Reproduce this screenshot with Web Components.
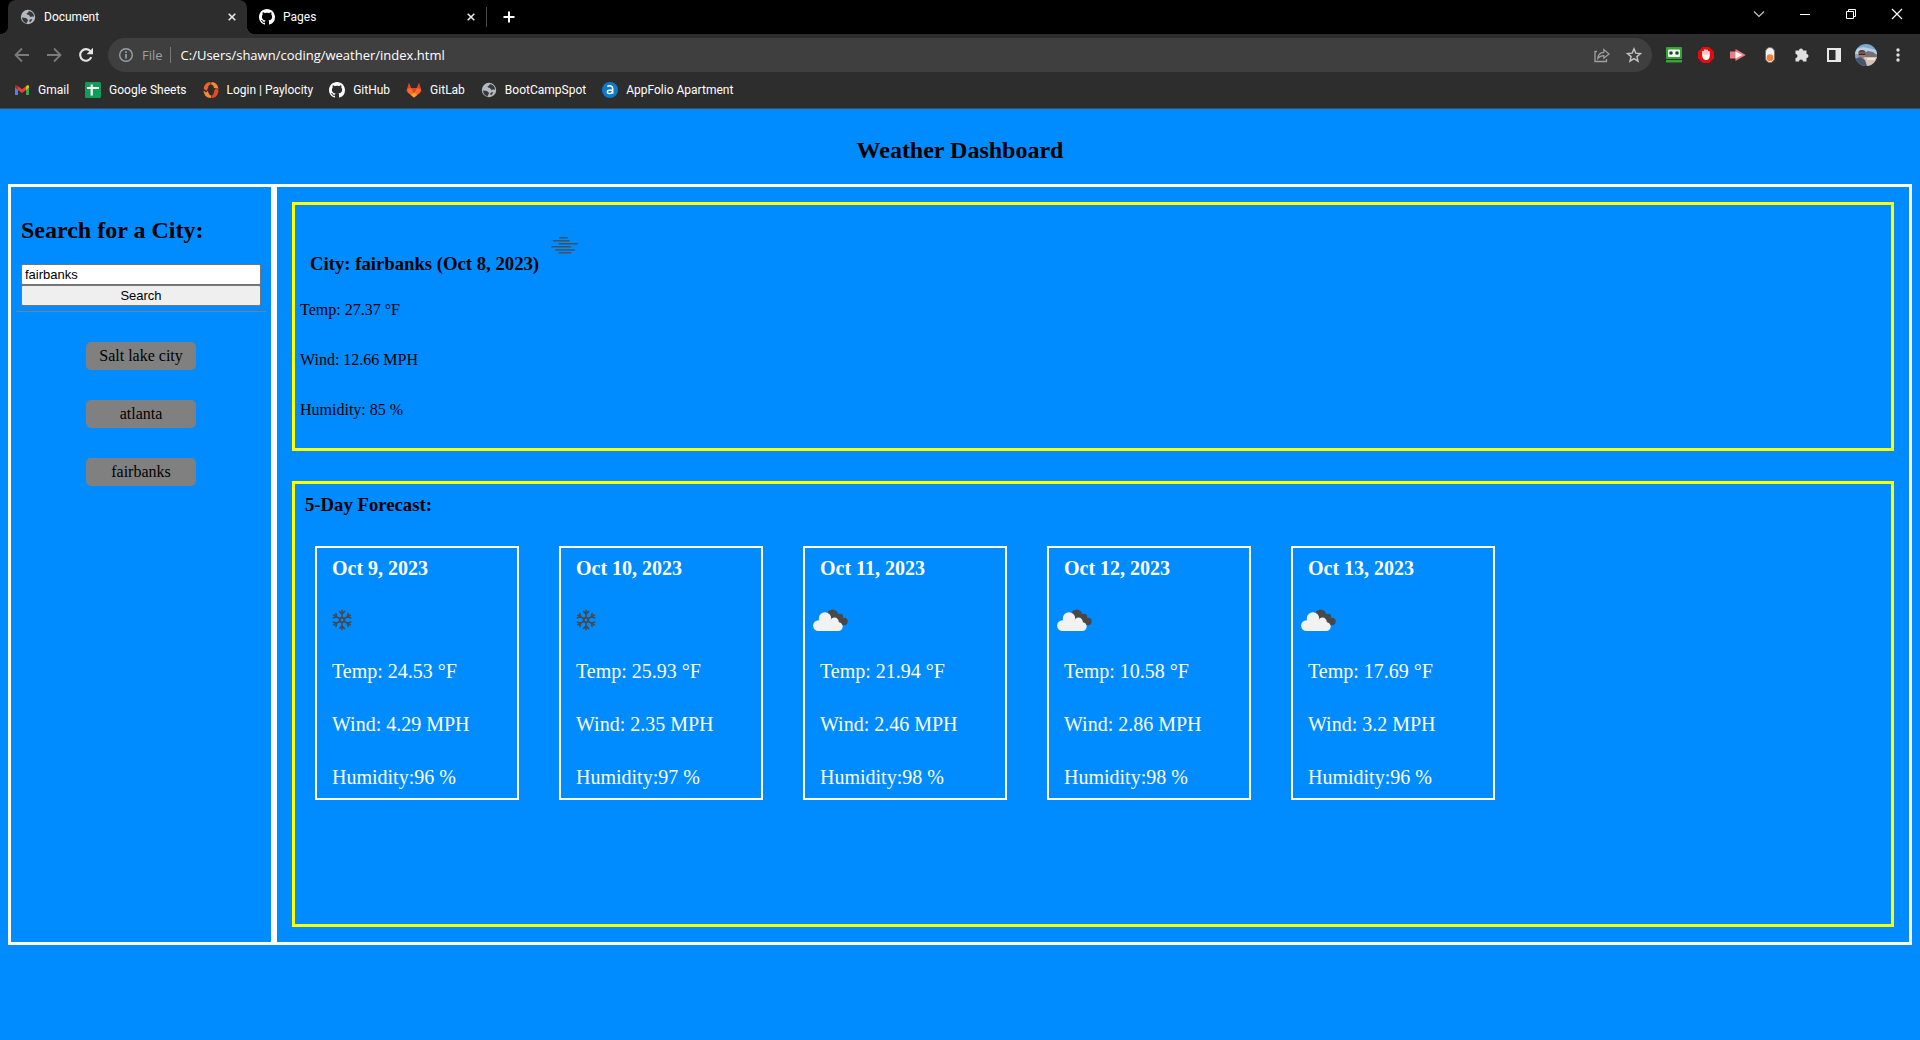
<!DOCTYPE html>
<html lang="en">
<head>
<meta charset="utf-8">
<title>Document</title>
<style>
  html, body { margin: 0; }
  body { background: #008cff; color: #000; font-family: "Liberation Serif", "Times New Roman", serif; font-size: 16px; }
</style>
</head>
<body>
<browser-chrome>
  <browser-tab slot="tabs" active icon="globe">Document</browser-tab>
  <browser-tab slot="tabs" icon="github">Pages</browser-tab>
  <bookmark-link slot="bookmarks" icon="gmail">Gmail</bookmark-link>
  <bookmark-link slot="bookmarks" icon="sheets">Google Sheets</bookmark-link>
  <bookmark-link slot="bookmarks" icon="paylocity">Login | Paylocity</bookmark-link>
  <bookmark-link slot="bookmarks" icon="github">GitHub</bookmark-link>
  <bookmark-link slot="bookmarks" icon="gitlab">GitLab</bookmark-link>
  <bookmark-link slot="bookmarks" icon="globe">BootCampSpot</bookmark-link>
  <bookmark-link slot="bookmarks" icon="appfolio">AppFolio Apartment</bookmark-link>
</browser-chrome>
<weather-dashboard>
  <city-search slot="search">
    <city-button>Salt lake city</city-button>
    <city-button>atlanta</city-button>
    <city-button>fairbanks</city-button>
  </city-search>
  <current-weather slot="main" city="fairbanks" date="Oct 8, 2023" temp="27.37" wind="12.66" humidity="85" sky="mist"></current-weather>
  <forecast-panel slot="main">
    <forecast-card date="Oct 9, 2023" sky="snow" temp="24.53" wind="4.29" humidity="96"></forecast-card>
    <forecast-card date="Oct 10, 2023" sky="snow" temp="25.93" wind="2.35" humidity="97"></forecast-card>
    <forecast-card date="Oct 11, 2023" sky="clouds" temp="21.94" wind="2.46" humidity="98"></forecast-card>
    <forecast-card date="Oct 12, 2023" sky="clouds" temp="10.58" wind="2.86" humidity="98"></forecast-card>
    <forecast-card date="Oct 13, 2023" sky="clouds" temp="17.69" wind="3.2" humidity="96"></forecast-card>
  </forecast-panel>
</weather-dashboard>

<script>
const svg = (size, body) => `<svg width="${size}" height="${size}" viewBox="0 0 ${size} ${size}" fill="none" aria-hidden="true">${body}</svg>`;

const icons = {
  globe: svg(16, '<circle cx="8" cy="8" r="7.2" fill="#b4b8bf"/><path d="M2 8.600c1.500.2 2.800.1 3.800.3 1 .2 1 1.300 1.900 1.700.6.300.2 1.500-.6 2.300-.4.500-.3 1-.5 1.500C3.900 13.600 2 11.500 2 8.600zM8.500 2.200c.3 1-.6 1.500-1.400 1.800-.9.300-.4 1.300.3 1.500 1.100.3 1.900.5 2.100 1.300.2.900 1.100 1.300 2 1 .8-.3 1.700-.3 2.500.1.200-3-2-5.700-5.500-5.700zM9.500 11.200c.5-.9 1.700-1 2.700-.8-.5 1.200-1.200 2-2.300 2.700-.6-.4-.7-1.200-.4-1.900z" fill="#36383b"/>'),
  github: svg(16, '<path fill="#fff" d="M8 0C3.580 0 0 3.580 0 8c0 3.540 2.290 6.530 5.470 7.590.4.070.55-.17.55-.38 0-.19-.01-.82-.01-1.490-2.010.37-2.530-.49-2.690-.94-.09-.23-.48-.94-.82-1.130-.28-.15-.68-.52-.01-.53.63-.01 1.080.58 1.230.82.72 1.210 1.870.87 2.330.66.07-.52.28-.87.51-1.070-1.780-.2-3.640-.89-3.640-3.950 0-.87.31-1.590.82-2.150-.08-.2-.36-1.020.08-2.120 0 0 .67-.21 2.200.82.640-.18 1.320-.27 2-.27s1.360.09 2 .27c1.530-1.040 2.200-.82 2.200-.82.440 1.100.160 1.920.080 2.120.51.560.82 1.270.82 2.150 0 3.070-1.870 3.750-3.650 3.950.29.25.54.73.54 1.480 0 1.070-.01 1.930-.01 2.200 0 .21.150.46.550.38A8.010 8.010 0 0 0 16 8c0-4.420-3.580-8-8-8z"/>'),
  gmail: svg(16, '<path d="M1 4v9h3V7z" fill="#4285f4"/><path d="M15 4v9h-3V7z" fill="#34a853"/><path d="M1 4.500v1l3 2.500V4.500C3.500 3 1 2.500 1 4.500z" fill="#c5221f"/><path d="M15 4.500v1L12 8V4.500c.5-1.500 3-2 3 0z" fill="#fbbc04"/><path d="M4 4.200l4 3 4-3V8l-4 3-4-3z" fill="#ea4335"/>'),
  sheets: svg(16, '<rect width="16" height="16" rx="1.500" fill="#0f9d58"/><path d="M2 6h12M6.700 2.500v11" stroke="#fff" stroke-width="2.200"/>'),
  paylocity: svg(16, '<path d="M8 2.500c1.700 0 2.700 1.500 3 3.500l4.500.8C15 3 12.500 0 8.500 0z" fill="#f68b33"/><path d="M7.500 0C3.500 0 1 3 .7 6.800L3.500 9 5 6c.3-2 1-3.200 2.500-3.500z" fill="#f0612b"/><path d="M.5 8.500L3 10.500l2-1.800c.2 2.200 1.200 4.300 3 4.800V16C3.500 16 .8 13 .5 8.500z" fill="#f68b33"/><path d="M15.500 8c0 4.500-2.500 8-7 8v-2.500c1.700-.3 2.600-2.500 2.700-5L13 6.500z" fill="#dd4a25"/>'),
  gitlab: svg(16, '<path d="M8 15.500L.5 9.600 1 7l2-6.500L5.200 6h5.600L13 .5 15 7l.5 2.600z" fill="#e24329"/><path d="M8 15.500L2.500 11 1 7l4.200-1L8 12l2.800-6L15 7l-1.500 4z" fill="#fc6d26"/><path d="M5 13l3-2.500L11 13l-3 2.500z" fill="#fca326"/><path d="M5.200 6h5.600L8 11z" fill="#e24329"/>'),
  appfolio: svg(16, '<circle cx="8" cy="8" r="8" fill="#0d7bc8"/><path d="M5.300 4.500c2.500-1.300 5.400-.6 5.400 2.200v5M10.700 8.300H7.200c-2.400 0-2.500 3.300 0 3.300 1.700 0 3.500-1 3.500-3.300" stroke="#fff" stroke-width="1.500"/>'),
  close: svg(16, '<path d="M4.700 4.700l6.600 6.600M11.300 4.700l-6.600 6.600" stroke="#e8e8e8" stroke-width="1.600"/>'),
  plus: svg(16, '<path d="M8 2.500v11M2.500 8h11" stroke="#fff" stroke-width="2"/>'),
  back: svg(16, '<path d="M15 8H2M8 1.500L1.500 8 8 14.500" stroke="#7b7b7b" stroke-width="1.800"/>'),
  forward: svg(16, '<path d="M1 8h13M8 1.500L14.500 8 8 14.500" stroke="#7b7b7b" stroke-width="1.800"/>'),
  reload: svg(16, '<path d="M13.300 10.200A5.800 5.800 0 1 1 12.600 4.400" stroke="#e4e4e4" stroke-width="2.100"/><path d="M15 .8v6.400H8.600z" fill="#e4e4e4"/>'),
  info: svg(16, '<circle cx="8" cy="8" r="6.300" stroke="#9aa0a6" stroke-width="1.400"/><path d="M8 7v4.500M8 4.300v1.700" stroke="#9aa0a6" stroke-width="1.700"/>'),
  share: svg(16, '<path d="M3 4.500H1v10h11.500v-2.500" stroke="#a0a0a0" stroke-width="1.300"/><path d="M3.800 11.500c.3-4 2.500-6 6-6.200V2.500L15 7l-5.200 4.300V8.600c-2.500 0-4.300.7-6 2.900z" stroke="#a0a0a0" stroke-width="1.200"/>'),
  star: svg(16, '<path d="M8 1.800l1.800 4.300 4.700.4-3.600 3.100 1.100 4.600-4-2.500-4 2.500 1.100-4.600-3.600-3.100 4.700-.4z" stroke="#c4c4c4" stroke-width="1.400"/>'),
  robot: svg(16, '<rect y="0" width="16" height="12" rx="1" fill="#36a436"/><rect x="2" y="2.500" width="12" height="7.500" rx="1" fill="#eef5ee"/><circle cx="5" cy="6" r="1.800" fill="#27422a"/><circle cx="11" cy="6" r="1.800" fill="#27422a"/><rect y="13" width="16" height="2.500" fill="#36a436"/>'),
  blocker: svg(16, '<path d="M4.700 0h6.600L16 4.700v6.600L11.300 16H4.700L0 11.300V4.700z" fill="#e40d0d"/><path d="M5 8V4.500M7 7.500V3M9 7.500V3.200M10.900 8V4.700" stroke="#fff" stroke-width="1.500" stroke-linecap="round"/><path d="M4.300 7.500h7.400V9c0 2.500-1.500 4-3.500 4s-3.900-1.500-3.900-4z" fill="#fff"/>'),
  arrow: svg(16, '<path d="M0 4.500h5.500V2L15.800 8 5.500 14v-2.500H0z" fill="#f2797d"/><path d="M5.500 4.500L12.500 8l-7 3.500z" fill="#fff"/>'),
  pill: svg(16, '<rect x="3.500" y=".5" width="9" height="15" rx="4.500" fill="#f1f1f1" stroke="#77706a"/><circle cx="8" cy="10.700" r="3.400" fill="#f58232"/>'),
  puzzle: svg(16, '<path d="M1.500 3.500H5a2 2 0 1 1 4 0h3.500V7a2 2 0 1 1 0 4v3.500H9a2 2 0 0 0-4 0H1.500V11a2 2 0 0 0 0-4z" fill="#e0e0e0"/>'),
  panel: svg(16, '<path fill-rule="evenodd" d="M1 1h14v14H1zM3 3v10h6.500V3z" fill="#e8e8e8"/>'),
  avatar: svg(22, '<clipPath id="c"><circle cx="11" cy="11" r="11"/></clipPath><g clip-path="url(#c)"><path fill="#7ea9cf" d="M0 0h22v22H0z"/><path d="M0 5l8-2 14 3v4H0z" fill="#b8cfe0"/><path d="M9 9l4-2 5 1 4 3v3H9z" fill="#776f76"/><path d="M9 13h13v9H9z" fill="#d7c0b5"/><path d="M12 14h8v2h-8z" fill="#eee4df"/><circle cx="7" cy="10" r="4" fill="#ae7664"/><path d="M3.500 8.500C4 5 10 5 10.500 8.500z" fill="#49464e"/><path d="M4 9.500h6.500v1.500H4z" fill="#292d38"/><path d="M0 15l5-2 5 3 2 6H0z" fill="#45566d"/></g>'),
  dots: svg(16, '<circle cx="8" cy="3" r="1.700" fill="#e0e0e0"/><circle cx="8" cy="8" r="1.700" fill="#e0e0e0"/><circle cx="8" cy="13" r="1.700" fill="#e0e0e0"/>'),
  chevron: svg(12, '<path d="M1 3.500l5 5 5-5" stroke="#c8c8c8" stroke-width="1.200"/>'),
  minimize: svg(12, '<path d="M1 6.500h10" stroke="#fff"/>'),
  restore: svg(12, '<path d="M1.500 3.500h7v7h-7zM3.500 3.500v-2h7v7h-2" stroke="#fff"/>'),
  exit: svg(12, '<path d="M1 1l10 10M11 1L1 11" stroke="#fff" stroke-width="1.200"/>'),
  mist: svg(50, '<path d="M20 17.700h8.700M14 20.700h16.500M19.500 23.800H39M12.300 26.800H32M16.500 30H36M19.500 32.700h12.700" stroke="#484848" stroke-width="1.500" opacity=".85"/>'),
  snow: svg(50, `<g stroke="#484848" stroke-width="1.500">${[0, 60, 120, 180, 240, 300].map(a => `<path transform="rotate(${a} 25 25)" d="M25 23.500V14.700M22.100 15.900l2.900 3.200 2.900-3.200"/>`).join('')}<circle cx="25" cy="25" r="2.400"/></g>`),
  clouds: svg(50, '<g fill="#484848"><circle cx="27.600" cy="20" r="5.500"/><circle cx="35" cy="22" r="3.200"/><circle cx="39" cy="26.500" r="3.700"/><path d="M27 20h8l4 4v6h-9z"/></g><g fill="#f2f2f2"><circle cx="20" cy="23.500" r="6.200"/><circle cx="13.500" cy="30.600" r="5.400"/><circle cx="29.500" cy="27" r="4.400"/><circle cx="33.300" cy="31.600" r="4.400"/><path d="M13.500 26h16l3.800 5v5H13.500z"/></g>')
};

function define(name, render) {
  customElements.define(name, class extends HTMLElement {
    connectedCallback() {
      if (this.shadowRoot) return;
      this.attachShadow({ mode: 'open' }).innerHTML = render(this);
    }
  });
}

const iconButton = (icon, label, cls = '') => `<button type="button" class="${cls}" aria-label="${label}">${icons[icon]}</button>`;

define('browser-tab', el => `
<style>
  :host { display: flex; align-items: center; box-sizing: border-box; width: 239px; height: 34px; padding: 7px 7px 7px 12px; gap: 8px; color: #fff; font-size: 12px; line-height: 16px; }
  :host([active]) { position: relative; background: #2d2d2d; border-radius: 8px 8px 0 0; }
  :host([active])::before, :host([active])::after { content: ""; position: absolute; bottom: 0; width: 8px; height: 8px; }
  :host([active])::before { right: 100%; background: radial-gradient(circle at 0 0, #000 8px, #2d2d2d 8px); }
  :host([active])::after { left: 100%; background: radial-gradient(circle at 100% 0, #000 8px, #2d2d2d 8px); }
  .name { flex: 1; }
  svg { display: block; }
  button { padding: 0; border: 0; background: none; }
</style>
${icons[el.getAttribute('icon')]}<span class="name"><slot></slot></span>${iconButton('close', 'Close tab')}`);

define('bookmark-link', el => `
<style>
  :host { display: block; }
  a { display: flex; align-items: center; gap: 8px; color: #fff; text-decoration: none; font-size: 12px; line-height: 16px; }
</style>
<a href="#">${icons[el.getAttribute('icon')]}<span><slot></slot></span></a>`);

define('browser-chrome', () => `
<style>
  :host { display: block; background: #2d2d2d; border-bottom: 1px solid #4a4a4a; font-family: Roboto, "Open Sans", sans-serif; }
  .tabs { display: flex; height: 34px; padding-left: 8px; background: #000; }
  .tabs ::slotted(browser-tab) { flex: none; }
  .split { width: 1px; height: 20px; margin: 7px 14px 0 0; background: #4a4a4a; }
  .window { display: flex; margin-left: auto; }
  button { display: flex; align-items: center; justify-content: center; padding: 0; border: 0; background: none; }
  .add { width: 16px; height: 34px; }
  .control { width: 46px; height: 28px; }
  .toolbar { display: flex; align-items: center; height: 42px; padding: 0 6px; }
  .tool { width: 32px; height: 32px; }
  .address { flex: 1; display: flex; align-items: center; height: 34px; margin: 0 6px; padding: 0 2px 0 10px; border-radius: 17px; background: #3f3f3f; box-sizing: border-box; font: 13px "Open Sans", "Noto Sans", sans-serif; }
  .address label { margin: 0 6px 0 8px; padding-right: 7px; border-right: 1px solid #777; color: #9aa0a6; line-height: 16px; }
  .address input { flex: 1; min-width: 0; padding: 0 4px; border: 0; background: none; color: #fff; font: inherit; outline: 0; }
  .bookmarks { display: flex; align-items: center; gap: 16px; height: 28px; padding: 0 14px 4px; }
</style>
<div class="tabs"><slot name="tabs"></slot><span class="split"></span>${iconButton('plus', 'New tab', 'add')}
  <div class="window">${iconButton('chevron', 'Search tabs', 'control')}${iconButton('minimize', 'Minimize', 'control')}${iconButton('restore', 'Restore', 'control')}${iconButton('exit', 'Close', 'control')}</div>
</div>
<div class="toolbar">
  ${iconButton('back', 'Back', 'tool')}${iconButton('forward', 'Forward', 'tool')}${iconButton('reload', 'Reload', 'tool')}
  <div class="address">${icons.info}<label for="url">File</label><input id="url" type="text" value="C:/Users/shawn/coding/weather/index.html">${iconButton('share', 'Share', 'tool')}${iconButton('star', 'Bookmark', 'tool')}</div>
  ${['robot', 'blocker', 'arrow', 'pill', 'puzzle', 'panel', 'avatar', 'dots'].map(i => iconButton(i, i, 'tool')).join('')}
</div>
<nav class="bookmarks"><slot name="bookmarks"></slot></nav>`);

define('weather-dashboard', () => `
<style>
  :host { display: block; padding: 28px 8px 8px; }
  h1 { margin: 0 0 20px; font-size: 24px; line-height: 27px; text-align: center; }
  .board { display: flex; min-height: 761px; }
  aside, main { box-sizing: border-box; border: 3px solid #fff; }
  aside { flex: none; width: 266px; padding: 30px 5px 5px; }
  main { flex: 1; min-width: 0; display: flex; flex-direction: column; gap: 30px; padding: 15px; }
  ::slotted(forecast-panel) { flex: 1; }
</style>
<h1>Weather Dashboard</h1>
<div class="board"><aside><slot name="search"></slot></aside><main><slot name="main"></slot></main></div>`);

define('city-button', () => `
<style>
  :host { display: block; }
  button { display: block; width: 110px; height: 28px; padding: 0; border: 0; border-radius: 5px; background: #808080; color: #000; font: inherit; }
</style>
<button type="button"><slot></slot></button>`);

define('city-search', () => `
<style>
  :host { display: block; }
  form { display: flex; flex-direction: column; margin: 0 5px 5px; }
  label { margin-bottom: 20px; font-size: 24px; line-height: 27px; font-weight: bold; }
  input, button { box-sizing: border-box; height: 21px; border: 1px solid #767676; border-radius: 2px; color: #000; font: 13px "Liberation Sans", Arial, sans-serif; }
  input { padding: 0 3px; background: #fff; }
  button { padding: 0; background: #efefef; }
  hr { height: 1px; margin: 0 0 30px; border: 0; background: #808080; }
  .history { display: flex; flex-direction: column; align-items: center; gap: 30px; }
</style>
<form><label for="city">Search for a City:</label><input id="city" type="text" value="fairbanks"><button type="button">Search</button></form>
<hr>
<div class="history"><slot></slot></div>`);

define('current-weather', el => `
<style>
  :host { display: block; padding: 15px 5px 29px; border: 3px solid #ff0; }
  h3 { margin: 0 10px 26px; }
  .facts { display: flex; flex-direction: column; gap: 32px; }
  p { margin: 0; line-height: 18px; }
</style>
<h3>City: ${el.getAttribute('city')} (${el.getAttribute('date')})${icons[el.getAttribute('sky')]}</h3>
<div class="facts"><p>Temp: ${el.getAttribute('temp')} °F</p><p>Wind: ${el.getAttribute('wind')} MPH</p><p>Humidity: ${el.getAttribute('humidity')} %</p></div>`);

define('forecast-panel', () => `
<style>
  :host { display: block; padding: 10px; border: 3px solid #ff0; }
  h3 { margin: 0 0 30px; line-height: 22px; }
  .cards { display: flex; flex-wrap: wrap; gap: 40px; padding: 0 10px; }
</style>
<h3>5-Day Forecast:</h3>
<div class="cards"><slot></slot></div>`);

define('forecast-card', el => `
<style>
  :host { display: flex; flex-direction: column; gap: 15px; width: 200px; padding: 9px 0; border: 2px solid #fff; color: #fff; font-size: 20px; line-height: 23px; }
  h4, p { margin: 0 15px; font-size: 20px; }
  .facts { display: flex; flex-direction: column; gap: 30px; }
  svg { display: block; }
</style>
<h4>${el.getAttribute('date')}</h4>
${icons[el.getAttribute('sky')]}
<div class="facts"><p>Temp: ${el.getAttribute('temp')} °F</p><p>Wind: ${el.getAttribute('wind')} MPH</p><p>Humidity:${el.getAttribute('humidity')} %</p></div>`);
</script>
</body>
</html>
